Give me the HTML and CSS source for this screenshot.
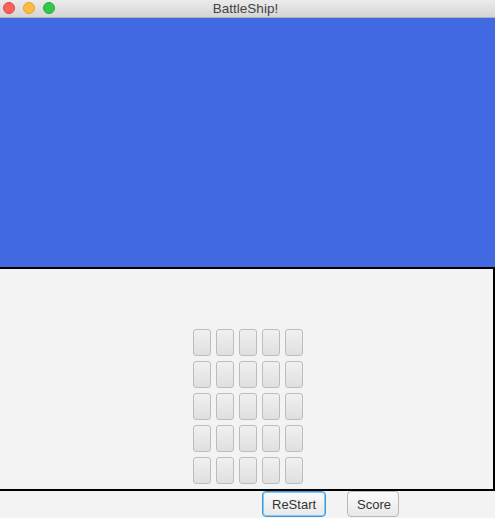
FILE: index.html
```html
<!DOCTYPE html>
<html>
<head>
<meta charset="utf-8">
<link rel="stylesheet" href="styles.css">
</head>
<body>
<div class="window">
  <div class="titlebar">
    <div class="lights">
      <span class="light red"></span>
      <span class="light yellow"></span>
      <span class="light green"></span>
    </div>
    <div class="title">BattleShip!</div>
  </div>
  <div class="sea"></div>
  <div class="pane">
    <div class="grid">
      <button class="cell"></button><button class="cell"></button><button class="cell"></button><button class="cell"></button><button class="cell"></button>
      <button class="cell"></button><button class="cell"></button><button class="cell"></button><button class="cell"></button><button class="cell"></button>
      <button class="cell"></button><button class="cell"></button><button class="cell"></button><button class="cell"></button><button class="cell"></button>
      <button class="cell"></button><button class="cell"></button><button class="cell"></button><button class="cell"></button><button class="cell"></button>
      <button class="cell"></button><button class="cell"></button><button class="cell"></button><button class="cell"></button><button class="cell"></button>
    </div>
  </div>
  <div class="bar">
    <button class="btn focused">ReStart</button>
    <button class="btn">Score</button>
  </div>
</div>
</body>
</html>
```
FILE: styles.css
```css
* { box-sizing: border-box; }
html, body { margin: 0; padding: 0; background: #f3f3f3; }
body { width: 495px; height: 518px; overflow: hidden; font-family: "Liberation Sans", Arial, sans-serif; }

.titlebar {
  position: relative;
  height: 18px;
  background: linear-gradient(#ebebeb, #d5d5d5);
  border-bottom: 1px solid #b1b1b1;
  display: flex;
  align-items: center;
  justify-content: center;
}
.lights {
  position: absolute;
  left: 3px;
  top: 2px;
  display: flex;
  gap: 8px;
}
.light {
  width: 12px;
  height: 12px;
  border-radius: 50%;
  display: block;
}
.red { background: #fc605c; border: 1px solid #e14640; }
.yellow { background: #fdbc40; border: 1px solid #dea236; }
.green { background: #34c84a; border: 1px solid #27aa35; }
.title {
  font-size: 13.5px;
  color: #444;
  line-height: 17px;
  margin-left: -4px;
}

.sea {
  height: 249px;
  background: #4169e1;
}

.pane {
  height: 224px;
  width: 495px;
  border-top: 2px solid #000;
  border-right: 2px solid #000;
  border-bottom: 2px solid #000;
  background: #f3f3f3;
  display: flex;
  justify-content: center;
  padding-top: 60px;
  padding-left: 2px;
}
.grid {
  display: grid;
  grid-template-columns: repeat(5, 18px);
  grid-auto-rows: 27px;
  column-gap: 5px;
  row-gap: 5px;
  align-content: start;
}
.cell {
  width: 18px;
  height: 27px;
  margin: 0;
  padding: 0;
  border: 1px solid #bdbdbd;
  border-radius: 3px;
  background: linear-gradient(#f0f0f0, #dfdfdf);
}

.bar {
  height: 27px;
  display: flex;
  align-items: flex-start;
  padding-left: 262px;
  gap: 21px;
}
.btn {
  height: 26px;
  margin: 0;
  padding: 0 9px;
  font-family: "Liberation Sans", Arial, sans-serif;
  font-size: 13px;
  color: #333;
  background: linear-gradient(#fbfbfb, #e8e8e8);
  border: 1px solid #b8b8b8;
  border-radius: 4px;
}
.btn.focused {
  width: 64px;
  border: 1px solid #3b99d8;
  box-shadow: inset 0 0 0 1px #8cc6ef;
}
.btn:not(.focused) { width: 52px; }
```
